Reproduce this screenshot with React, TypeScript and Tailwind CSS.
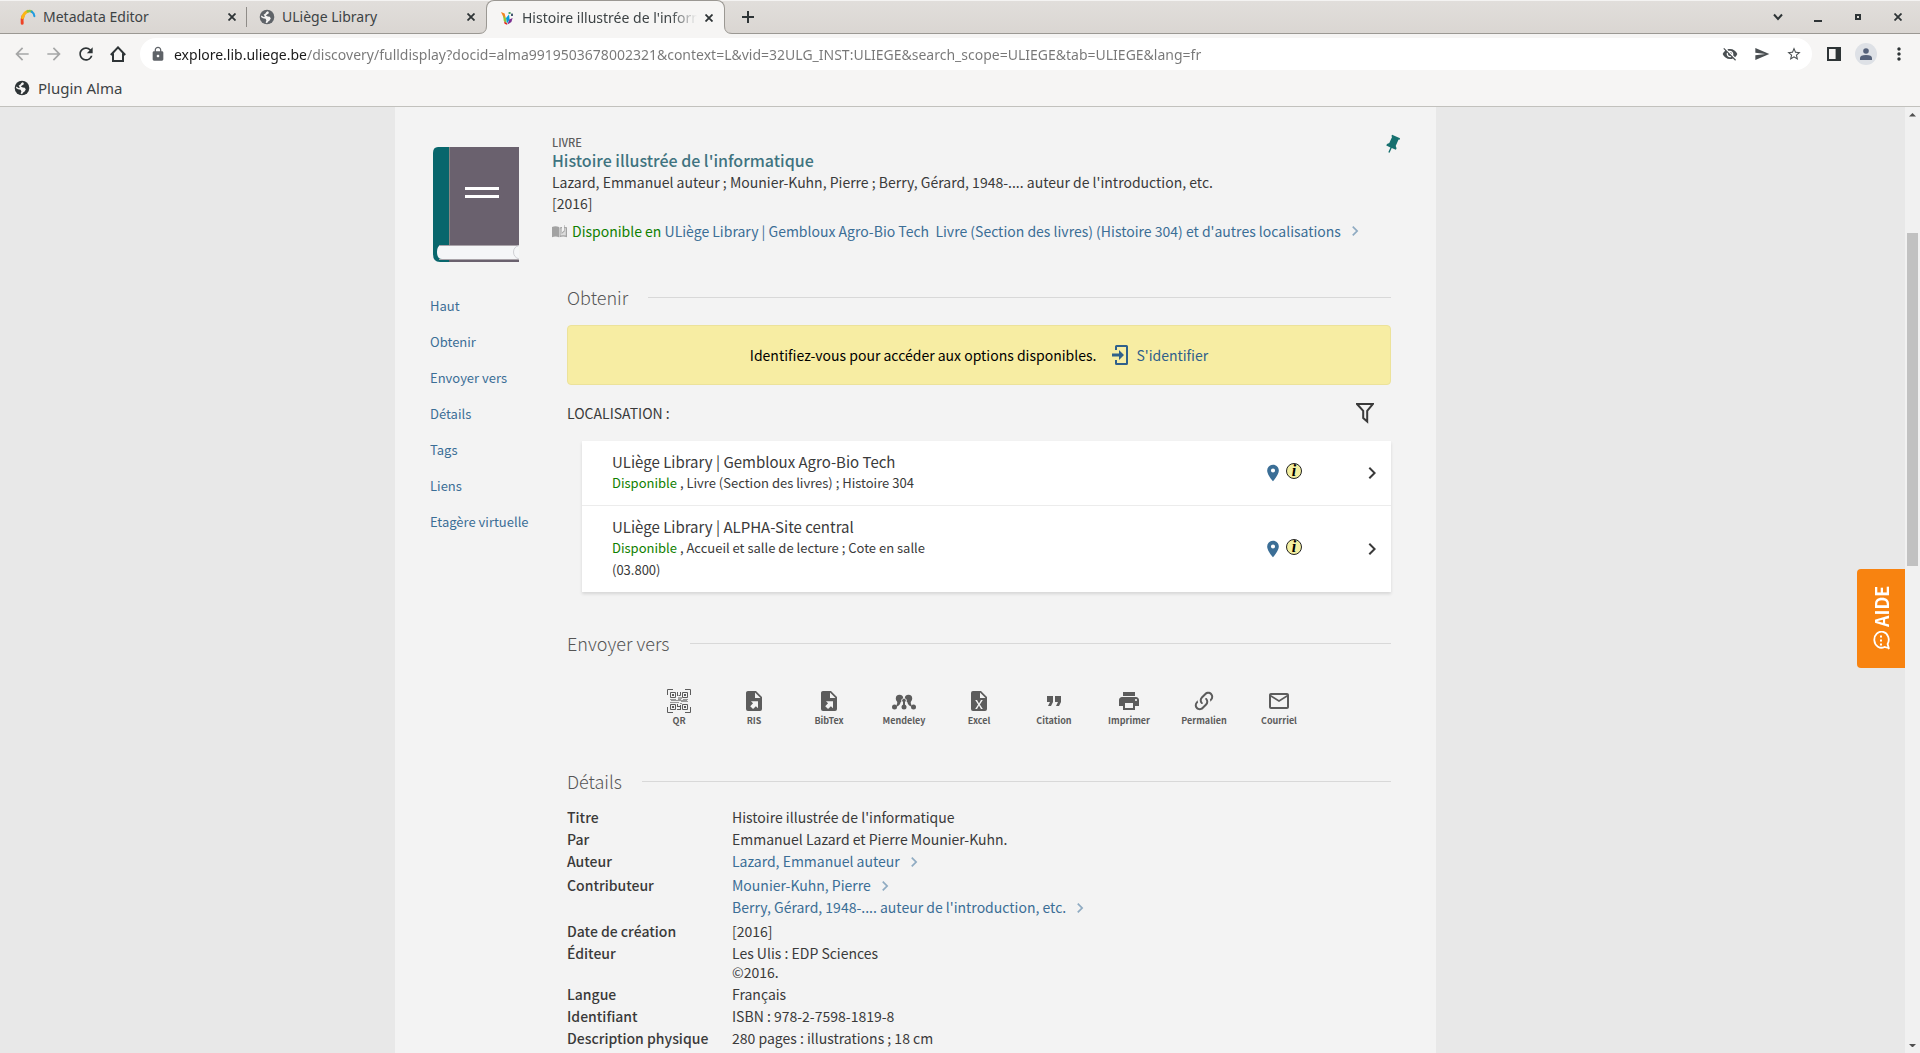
import React from 'react';
import {
  MdArrowBack,
  MdArrowForward,
  MdFormatQuote,
  MdKeyboardArrowRight,
  MdLock,
  MdMailOutline,
  MdMoreVert,
  MdPlace,
  MdPrint,
  MdRefresh,
  MdSend,
  MdStarBorder,
  MdVisibilityOff
} from 'react-icons/md';

interface IconProps {
  className?: string;
}

// ---------- icons ----------

const GlobeIcon: React.FC<IconProps> = ({ className }) => (
  <svg viewBox="0 0 16 16" className={className}>
    <circle cx="8" cy="8" r="7.3" fill="currentColor" />
    <path
      d="M8.6 2.2 9.8 3 9.6 4.6 8 5.4 6.8 6.6 8.8 7.6 10.8 7.8 11.8 9.4 10.6 11.4 9.2 12.4 8 14.2 6.6 13.6 7.4 11.4 6.6 9.8 4 9.2 2 8 2.4 6.6 4.6 8 6 7.6 4.6 5.8 6.4 4.4 7.4 3Z"
      fill="#f6f5f4"
    />
  </svg>
);

const AlmaIcon: React.FC<IconProps> = ({ className }) => (
  <svg viewBox="0 0 16 16" className={className} fill="none" strokeWidth="3" strokeLinecap="round">
    <path d="M2.200 14.200C1.800 11.500 2 9.400 3 7.200" stroke="#ee4326" />
    <path d="M2.600 8.600C3.600 5.400 5.400 3.200 7.600 2.400" stroke="#fbb615" />
    <path d="M7.600 2.400C9 1.800 10.600 1.800 12 2.800" stroke="#8cc63f" strokeWidth="2.400" />
    <path d="M11.600 2.600C13.400 3.600 14.200 5.200 14.400 7.200" stroke="#1e9be0" strokeWidth="2" />
  </svg>
);

const PrimoIcon: React.FC<IconProps> = ({ className }) => (
  <svg viewBox="0 0 16 16" className={className}>
    <path d="M2 2 5.6 3.4 7 9 4.6 7.4Z" fill="#f58220" />
    <path d="M4 5.6 7 8.4 7.6 13.6 4.8 11Z" fill="#8cc63f" />
    <path d="M7 8 10 4.4 10.6 9.6 8 13.6Z" fill="#009ddc" />
    <path d="M10.4 9.4 13.6 8 12.4 12 8.4 14.6Z" fill="#7b2f8f" />
    <path d="M5 11.2 8.2 13.6 8 14.8 5.6 13.8Z" fill="#e2231a" />
    <rect x="9.6" y="2" width="2" height="2" fill="#4aa564" />
    <rect x="12" y="3.6" width="2" height="2.4" fill="#43586e" />
  </svg>
);

const CrossIcon: React.FC<IconProps> = ({ className }) => (
  <svg viewBox="0 0 8 8" className={className} stroke="currentColor" strokeWidth="1.800">
    <path d="M.5 .5 7.500 7.500M7.500 .5 .5 7.500" />
  </svg>
);

const HomeIcon: React.FC<IconProps> = ({ className }) => (
  <svg viewBox="0 0 16 16" className={className} fill="none" stroke="currentColor" strokeWidth="2">
    <path d="M.8 9 8 1.4 15.2 9M3 7.4V15H13V7.4" />
  </svg>
);

const SidePanelIcon: React.FC<IconProps> = ({ className }) => (
  <svg viewBox="0 0 14 14" className={className}>
    <path d="M0 0H14V14H0ZM2 2V12H8.6V2Z" fill="currentColor" fillRule="evenodd" />
  </svg>
);

const BookCover: React.FC<IconProps> = ({ className }) => (
  <svg viewBox="0 0 86 115" className={className}>
    <path d="M16 0H86V98H16Z" fill="#6a616e" />
    <path d="M5 0H16V115H7Q0 115 0 107V6Q0 0 5 0Z" fill="#08666c" />
    <path d="M16 113H86V115H16Z" fill="#6a616e" />
    <path d="M16.500 0V98" stroke="#8d8582" />
    <path d="M9 98H86V112H9Q4 112 4 105T9 98Z" fill="#f5f6f8" />
    <path d="M6 98.500H86M6 112.500H86" stroke="#aaa4aa" />
    <path d="M86 98.500Q80.500 100 80.500 105T86 112" fill="none" stroke="#cfd0d4" />
    <path d="M32 40H66V43H32ZM32 48H66V51H32Z" fill="#fff" />
  </svg>
);

const PinIcon: React.FC<IconProps> = ({ className }) => (
  <svg viewBox="0 0 24 24" className={className}>
    <path
      d="M16 12V4H17V2H7V4H8V12L6 14V16H11.2V22H12.800V16H18V14L16 12Z"
      fill="currentColor"
      transform="rotate(24 12 12)"
    />
  </svg>
);

const OpenBookIcon: React.FC<IconProps> = ({ className }) => (
  <svg viewBox="0 0 15 13" className={className}>
    <path d="M0 2Q3.500 .5 7 2V12.200Q3.500 11 0 12.200Z" fill="#a2a2a2" />
    <path d="M7.500 2.500Q9 1.800 10 2V7.500L12 5.500V0L12.600 .2V2L15 2.200V12.200Q11 11 7.500 12.200Z" fill="#a2a2a2" />
    <path d="M8.500 3.400V10.600Q11 9.800 13.800 10.600V3.200L12.600 3V6.400L9.600 9V3Z" fill="#dcdcdc" />
  </svg>
);

const SignInIcon: React.FC<IconProps> = ({ className }) => (
  <svg viewBox="0 0 16 20" className={className}>
    <path d="M4 5V1.500Q4 1 4.500 1H14.500Q15 1 15 1.500V18.500Q15 19 14.500 19H4.500Q4 19 4 18.500V15" fill="none" stroke="currentColor" strokeWidth="2" />
    <path d="M0 8.500H7V5L12 10 7 15V11.500H0Z" fill="currentColor" />
  </svg>
);

const FilterIcon: React.FC<IconProps> = ({ className }) => (
  <svg viewBox="0 0 18 21" className={className}>
    <path d="M1 1H17L11.200 7.800V18.500L7.200 15V7.800Z" fill="none" stroke="currentColor" strokeWidth="2" />
  </svg>
);

const QrIcon: React.FC<IconProps> = ({ className }) => (
  <svg viewBox="0 0 24 24" className={className} fill="none" stroke="currentColor">
    <path d="M.5 6V.5H6M18 .5H23.500V6M23.500 18V23.500H18M6 23.500H.5V18" />
    <path d="M3.500 3.500H8.500V8.500H3.500ZM15.500 3.500H20.500V8.500H15.500ZM3.500 15.500H8.500V20.500H3.500ZM15.500 15.500H20.500V20.500H15.500Z" />
    <path d="M5 6H7M17 6H19M5 18H7M17 18H19" strokeWidth="2" />
    <path d="M10.500 3V7M13.500 3V6.500H11.500M11 9H15" />
    <path d="M3 10.500H9M11 10.500H14M16 10.500H21M4 11.500H20M3 13.500H12M14 12.500H21M13 14.500H15" opacity=".6" />
    <path d="M10.500 15V18M13.500 16V21M10 20.500H13M11 17.500H14" />
  </svg>
);

const FileExportIcon: React.FC<IconProps> = ({ className }) => (
  <svg viewBox="0 0 24 24" className={className} fill="currentColor">
    <path d="M6 2C4.890 2 4 2.900 4 4V20A2 2 0 0 0 6 22H18A2 2 0 0 0 20 20V8L14 2M13 3.500L18.500 9H13M8.930 12.220H16V19.290L13.880 17.170L11.050 20L8.220 17.170L11.050 14.350" />
  </svg>
);

const FileExcelIcon: React.FC<IconProps> = ({ className }) => (
  <svg viewBox="0 0 24 24" className={className} fill="currentColor">
    <path d="M14 2H6A2 2 0 0 0 4 4V20A2 2 0 0 0 6 22H18A2 2 0 0 0 20 20V8L14 2M15.800 20H14L12 16.600L10 20H8.200L11.100 15.500L8.200 11H10L12 14.400L14 11H15.800L12.900 15.500L15.800 20M13 9V3.500L18.500 9H13Z" />
  </svg>
);

const MendeleyIcon: React.FC<IconProps> = ({ className }) => (
  <svg viewBox="0 0 24 24" className={className} fill="currentColor">
    <path d="M4 18Q6 14 5 10L8 7 12 10 16 7 19 10Q18 14 20 18L18 17Q15 15 15.500 12L12 14 8.500 12Q9 15 6 17Z" />
    <circle cx="7.500" cy="9.500" r="3.700" />
    <circle cx="16.500" cy="9.500" r="3.700" />
    <circle cx="12" cy="12" r="2.800" fill="#f3f3f3" />
    <circle cx="12" cy="11.500" r="1.800" />
    <circle cx="2.500" cy="18" r="2.500" />
    <circle cx="12" cy="18" r="2.500" />
    <circle cx="21.500" cy="18" r="2.500" />
    <path d="M11 13H13V17H11Z" />
  </svg>
);

const LinkIcon: React.FC<IconProps> = ({ className }) => (
  <svg viewBox="0 0 24 24" className={className} fill="currentColor">
    <path d="M10.590 13.410C11 13.800 11 14.440 10.590 14.830C10.200 15.220 9.560 15.220 9.170 14.830C7.220 12.880 7.220 9.710 9.170 7.760L12.710 4.220C14.660 2.270 17.830 2.270 19.780 4.220C21.730 6.170 21.730 9.340 19.780 11.290L18.290 12.780C18.300 11.960 18.170 11.140 17.890 10.360L18.360 9.880C19.540 8.710 19.540 6.810 18.360 5.640C17.190 4.460 15.290 4.460 14.120 5.640L10.590 9.170C9.410 10.340 9.410 12.240 10.590 13.410M13.410 9.170C13.800 8.780 14.440 8.780 14.830 9.170C16.780 11.120 16.780 14.290 14.830 16.240L11.290 19.780C9.340 21.730 6.170 21.730 4.220 19.780C2.270 17.830 2.270 14.660 4.220 12.710L5.710 11.220C5.700 12.040 5.830 12.860 6.110 13.650L5.640 14.120C4.460 15.290 4.460 17.190 5.640 18.360C6.810 19.540 8.710 19.540 9.880 18.360L13.410 14.830C14.590 13.660 14.590 11.760 13.410 10.590C13 10.200 13 9.560 13.410 9.170Z" />
  </svg>
);

const ChatIcon: React.FC<IconProps> = ({ className }) => (
  <svg viewBox="0 0 20 18" className={className}>
    <path d="M3 16.500 4 12.500A8 7.200 0 1 1 7 15.600L2 17Z" fill="none" stroke="currentColor" strokeWidth="1.800" />
    <path d="M5.500 8H7.500V10H5.500ZM9.500 8H11.500V10H9.500ZM13.500 8H15.500V10H13.500Z" fill="currentColor" />
  </svg>
);

// ---------- data ----------

const navLinks = ['Haut', 'Obtenir', 'Envoyer vers', 'Détails', 'Tags', 'Liens', 'Etagère virtuelle'];

const locations = [
  { name: 'ULiège Library | Gembloux Agro-Bio Tech', place: ', Livre (Section des livres) ; Histoire 304' },
  { name: 'ULiège Library | ALPHA-Site central', place: ', Accueil et salle de lecture ; Cote en salle (03.800)' }
];

const sendActions: { label: string; Icon: React.ComponentType<IconProps> }[] = [
  { label: 'QR', Icon: QrIcon },
  { label: 'RIS', Icon: FileExportIcon },
  { label: 'BibTex', Icon: FileExportIcon },
  { label: 'Mendeley', Icon: MendeleyIcon },
  { label: 'Excel', Icon: FileExcelIcon },
  { label: 'Citation', Icon: MdFormatQuote },
  { label: 'Imprimer', Icon: MdPrint },
  { label: 'Permalien', Icon: LinkIcon },
  { label: 'Courriel', Icon: MdMailOutline }
];

const details: { label: string; values: string[]; link?: boolean }[] = [
  { label: 'Titre', values: ["Histoire illustrée de l'informatique"] },
  { label: 'Par', values: ['Emmanuel Lazard et Pierre Mounier-Kuhn.'] },
  { label: 'Auteur', values: ['Lazard, Emmanuel auteur'], link: true },
  { label: 'Contributeur', values: ['Mounier-Kuhn, Pierre', "Berry, Gérard, 1948-.... auteur de l'introduction, etc."], link: true },
  { label: 'Date de création', values: ['[2016]'] },
  { label: 'Éditeur', values: ['Les Ulis : EDP Sciences', '©2016.'] },
  { label: 'Langue', values: ['Français'] },
  { label: 'Identifiant', values: ['ISBN : 978-2-7598-1819-8'] },
  { label: 'Description physique', values: ['280 pages : illustrations ; 18 cm'] }
];

// ---------- browser chrome ----------

interface TabProps {
  title: string;
  icon: React.ReactNode;
  active?: boolean;
  divider?: boolean;
}

const Tab: React.FC<TabProps> = ({ title, icon, active, divider }) => (
  <div
    className={`relative flex h-[34px] w-[239px] shrink-0 items-center pr-[7px] pl-3 ${
      active ? 'rounded-t-lg border border-b-0 border-[#9b9893] bg-[#f6f5f4]' : ''
    }`}
  >
    {active && (
      <>
        <svg viewBox="0 0 8 8" className="absolute bottom-0 -left-2 size-2">
          <path d="M8 0V8H0V7.500Q7.500 7.500 7.500 0Z" fill="#f6f5f4" />
          <path d="M0 7.500Q7.500 7.500 7.500 0" fill="none" stroke="#9b9893" />
        </svg>
        <svg viewBox="0 0 8 8" className="absolute -right-2 bottom-0 size-2">
          <path d="M0 0V8H8V7.500Q.5 7.500 .5 0Z" fill="#f6f5f4" />
          <path d="M8 7.500Q.5 7.500 .5 0" fill="none" stroke="#9b9893" />
        </svg>
      </>
    )}
    {icon}
    <span
      className={`ml-[7px] flex-1 overflow-hidden whitespace-nowrap ${
        active ? '[mask-image:linear-gradient(to_right,black_85%,transparent)]' : ''
      }`}
    >
      {title}
    </span>
    <button aria-label="Fermer l'onglet" className="ml-1 flex size-4 items-center justify-center text-[#2e3436]">
      <CrossIcon className="size-2" />
    </button>
    {divider && <span className="absolute top-[7px] right-0 h-5 w-px bg-[#8f8c88]" />}
  </div>
);

const BrowserChrome: React.FC = () => (
  <header className="shrink-0 border-b border-[#c2c1bd] bg-[#f6f5f4] font-['Noto_Sans',sans-serif] text-sm text-[#3d4345]">
    <div className="flex h-[34px] items-center border-t border-b border-t-[#f4f3f2] border-b-[#9b9893] bg-linear-to-b from-[#e1dedb] to-[#dad6d2] pl-2">
      <Tab title="Metadata Editor" icon={<AlmaIcon className="size-4" />} divider />
      <Tab title="ULiège Library" icon={<GlobeIcon className="size-4 text-[#5f6368]" />} />
      <Tab title="Histoire illustrée de l'informatique" icon={<PrimoIcon className="size-4" />} active />
      <button aria-label="Nouvel onglet" className="ml-4 flex size-[14px] items-center justify-center text-[#2e3436]">
        <svg viewBox="0 0 12 12" className="size-3" stroke="currentColor" strokeWidth="2">
          <path d="M6 0V12M0 6H12" />
        </svg>
      </button>
      <div className="ml-auto flex items-center gap-6 pr-[14px] text-[#2e3436]">
        <button aria-label="Rechercher dans les onglets" className="flex size-4 items-center justify-center">
          <svg viewBox="0 0 10 8" className="w-[10px]" fill="none" stroke="currentColor" strokeWidth="2">
            <path d="M1 1.500 5 6 9 1.500" />
          </svg>
        </button>
        <button aria-label="Réduire" className="flex size-4 items-center justify-center pt-2">
          <span className="h-[2px] w-2 bg-current" />
        </button>
        <button aria-label="Agrandir" className="flex size-4 items-center justify-center">
          <span className="size-[6px] border-2 border-current" />
        </button>
        <button aria-label="Fermer" className="flex size-4 items-center justify-center">
          <CrossIcon className="size-2" />
        </button>
      </div>
    </div>

    <div className="flex h-10 items-center pl-3">
      <div className="flex items-center gap-3 text-[#2e3436]">
        <button aria-label="Précédent" className="flex size-5 items-center justify-center text-[#a5a6a6]">
          <MdArrowBack className="size-5" />
        </button>
        <button aria-label="Suivant" className="flex size-5 items-center justify-center text-[#a5a6a6]">
          <MdArrowForward className="size-5" />
        </button>
        <button aria-label="Actualiser" className="flex size-5 items-center justify-center">
          <MdRefresh className="size-5" />
        </button>
        <button aria-label="Accueil" className="flex size-5 items-center justify-center">
          <HomeIcon className="size-4" />
        </button>
      </div>
      <div className="ml-3 flex h-8 flex-1 items-center rounded-full bg-white pr-[10px] pl-[10px]">
        <MdLock className="size-4 shrink-0 text-[#5f6368]" />
        <input
          type="text"
          aria-label="Adresse"
          spellCheck={false}
          defaultValue="explore.lib.uliege.be/discovery/fulldisplay?docid=alma9919503678002321&context=L&vid=32ULG_INST:ULIEGE&search_scope=ULIEGE&tab=ULIEGE&lang=fr"
          className="ml-2 h-6 flex-1 bg-[linear-gradient(to_right,#1a1a1a_132px,#777_132px)] bg-clip-text text-transparent outline-none"
        />
        <div className="flex items-center gap-4 text-[#4a4f52]">
          <button aria-label="Cookies tiers bloqués">
            <MdVisibilityOff className="size-4" />
          </button>
          <button aria-label="Partager">
            <MdSend className="size-4" />
          </button>
          <button aria-label="Ajouter aux favoris">
            <MdStarBorder className="size-4" />
          </button>
        </div>
      </div>
      <div className="flex items-center gap-[14px] pr-[13px] pl-[15px] text-[#2e3436]">
        <button aria-label="Panneau latéral">
          <SidePanelIcon className="size-[14px]" />
        </button>
        <button aria-label="Profil" className="flex size-[22px] items-center justify-center rounded-full bg-[#dee1e6]">
          <svg viewBox="0 0 12 12" className="size-3" fill="#56627a">
            <circle cx="6" cy="3" r="2.800" />
            <path d="M0 12V10Q0 7 6 7T12 10V12Z" />
          </svg>
        </button>
        <button aria-label="Menu" className="flex w-4 justify-center">
          <MdMoreVert className="size-5 shrink-0" />
        </button>
      </div>
    </div>

    <div className="flex h-8 items-center pb-1 pl-[14px]">
      <a href="#alma" className="flex items-center gap-2 text-[15px] leading-5">
        <GlobeIcon className="size-4 text-[#2e3436]" />
        Plugin Alma
      </a>
    </div>
  </header>
);

// ---------- page ----------

const SectionTitle: React.FC<{ children: React.ReactNode }> = ({ children }) => (
  <div className="flex items-center gap-5">
    <h2 className="text-lg leading-6 font-light text-[#555]">{children}</h2>
    <span className="h-px flex-1 bg-[#d8d8d8]" />
  </div>
);

const RecordHeader: React.FC = () => (
  <div className="flex items-start pt-[27px] pr-[30px] pl-[38px]">
    <BookCover className="mt-[13px] h-[115px] w-[86px] shrink-0" />
    <div className="ml-[33px] flex-1">
      <p className="text-[11px] leading-4 font-medium text-[#5c5c5c]">LIVRE</p>
      <h1 className="text-base leading-5 font-medium text-[#3f7380]">
        <a href="#titre">Histoire illustrée de l'informatique</a>
      </h1>
      <p className="mt-[2px] leading-[21px]">
        Lazard, Emmanuel auteur ; Mounier-Kuhn, Pierre ; Berry, Gérard, 1948-.... auteur de l'introduction, etc.
        <br />
        [2016]
      </p>
      <p className="mt-[7px] flex items-center whitespace-pre leading-5">
        <OpenBookIcon className="mr-[5px] h-[13px] w-[15px]" />
        <span className="text-[#0f8000]">Disponible en </span>
        <a href="#obtenir" className="flex items-center text-[#3b6e96]">
          ULiège Library | Gembloux Agro-Bio Tech  Livre (Section des livres) (Histoire 304) et d'autres localisations
          <MdKeyboardArrowRight className="ml-1 size-5 text-[#8fabc2]" />
        </a>
      </p>
    </div>
    <button aria-label="Épingler" className="w-6 text-[#16706f]">
      <PinIcon className="size-[21px]" />
    </button>
  </div>
);

const LocationRow: React.FC<{ name: string; place: string }> = ({ name, place }) => (
  <li className="flex items-center border-b border-[#ececec] py-[11px] pr-[7px] pl-[30px] last:border-b-0">
    <div className="w-[320px]">
      <h3 className="text-[15px] leading-5">{name}</h3>
      <p className="text-[13px] leading-[22px]">
        <span className="text-[#0f8000]">Disponible</span> {place}
      </p>
    </div>
    <div className="ml-auto flex items-center gap-[3px]">
      <a href="#plan" aria-label="Plan" className="text-[#3b6e96]">
        <MdPlace className="size-5" />
      </a>
      <a
        href="#info"
        aria-label="Informations"
        className="mb-1 flex size-4 items-center justify-center rounded-full border border-[#222] bg-[#f3efa0] font-['Liberation_Serif',serif] text-base leading-none font-bold text-black italic"
      >
        i
      </a>
      <button aria-label="Voir les exemplaires" className="ml-[55px]">
        <MdKeyboardArrowRight className="size-6" />
      </button>
    </div>
  </li>
);

const DetailsList: React.FC = () => (
  <dl className="mt-[15px] grid grid-cols-[165px_1fr] gap-y-[3px]">
    {details.map(({ label, values, link }) => (
      <React.Fragment key={label}>
        <dt className="leading-[19px] font-medium">{label}</dt>
        <dd className={link ? 'space-y-px' : ''}>
          {values.map((value) =>
            link ? (
              <a key={value} href="#auteur" className="flex h-[21px] items-start leading-[19px] text-[#3b6e96]">
                {value}
                <MdKeyboardArrowRight className="ml-1 size-5 text-[#8fabc2]" />
              </a>
            ) : (
              <p key={value} className="leading-[19px]">{value}</p>
            )
          )}
        </dd>
      </React.Fragment>
    ))}
  </dl>
);

const RecordPage: React.FC = () => (
  <main className="overflow-hidden bg-[#f3f3f3]">
    <RecordHeader />
    <div className="flex pt-[23px] pr-[45px] pl-[35px]">
      <nav className="w-[137px] shrink-0 pt-[11px]">
        <ul className="space-y-4 text-[13px] leading-5 text-[#3b6e96]">
          {navLinks.map((link) => (
            <li key={link}>
              <a href="#section">{link}</a>
            </li>
          ))}
        </ul>
      </nav>
      <div className="min-w-0 flex-1">
        <section>
          <SectionTitle>Obtenir</SectionTitle>
          <div className="mt-4 flex h-[60px] items-center justify-center rounded-sm border border-[#ece29a] bg-[#f7eda3] text-black">
            Identifiez-vous pour accéder aux options disponibles.
            <button className="ml-4 flex items-center gap-2 text-[#2f608b]">
              <SignInIcon className="h-5 w-4" />
              S'identifier
            </button>
          </div>
          <div className="mt-4 flex h-6 items-center justify-between pr-[17px]">
            <h3>LOCALISATION :</h3>
            <button aria-label="Filtrer">
              <FilterIcon className="h-[21px] w-[18px]" />
            </button>
          </div>
          <ul className="mt-4 ml-[15px] bg-white shadow-[0_2px_3px_rgba(0,0,0,0.12)]">
            {locations.map((location) => (
              <LocationRow key={location.name} {...location} />
            ))}
          </ul>
        </section>

        <section className="mt-[39px]">
          <SectionTitle>Envoyer vers</SectionTitle>
          <div className="mt-[34px] flex justify-center">
            {sendActions.map(({ label, Icon }) => (
              <button key={label} className="flex w-[75px] flex-col items-center gap-[2px] text-[#5c5c5c]">
                <Icon className="size-6" />
                <span className="text-[9px] leading-3 font-bold">{label}</span>
              </button>
            ))}
          </div>
        </section>

        <section className="mt-[42px]">
          <SectionTitle>Détails</SectionTitle>
          <DetailsList />
        </section>
      </div>
    </div>
  </main>
);

const App: React.FC = () => (
  <div className="flex h-screen flex-col overflow-hidden bg-[#e8e8e8] font-['Noto_Sans_CJK_SC',sans-serif] text-sm text-[#3a3a3a]">
    <BrowserChrome />
    <div className="flex min-h-0 flex-1">
      <div className="relative grid flex-1 grid-cols-[395fr_1041fr_469fr]">
        <div />
        <RecordPage />
        <div />
        <button className="absolute top-[462px] right-0 flex h-[99px] w-12 rotate-180 items-center justify-center gap-1 rounded-r-sm bg-[#f88310] text-lg font-bold text-white [writing-mode:vertical-rl]">
          <ChatIcon className="size-5 rotate-90" />
          AIDE
        </button>
      </div>
      <div className="flex w-[15px] flex-col items-center bg-[#f1f1f1] py-[6px]">
        <svg viewBox="0 0 8 4" className="w-[7px] shrink-0" fill="#505050">
          <path d="M0 4 4 0 8 4Z" />
        </svg>
        <div className="mt-[116px] h-[333px] w-[11px] bg-[#c1c1c1]" />
        <svg viewBox="0 0 8 4" className="mt-auto w-[7px] shrink-0" fill="#505050">
          <path d="M0 0 4 4 8 0Z" />
        </svg>
      </div>
    </div>
  </div>
);

export default App;
